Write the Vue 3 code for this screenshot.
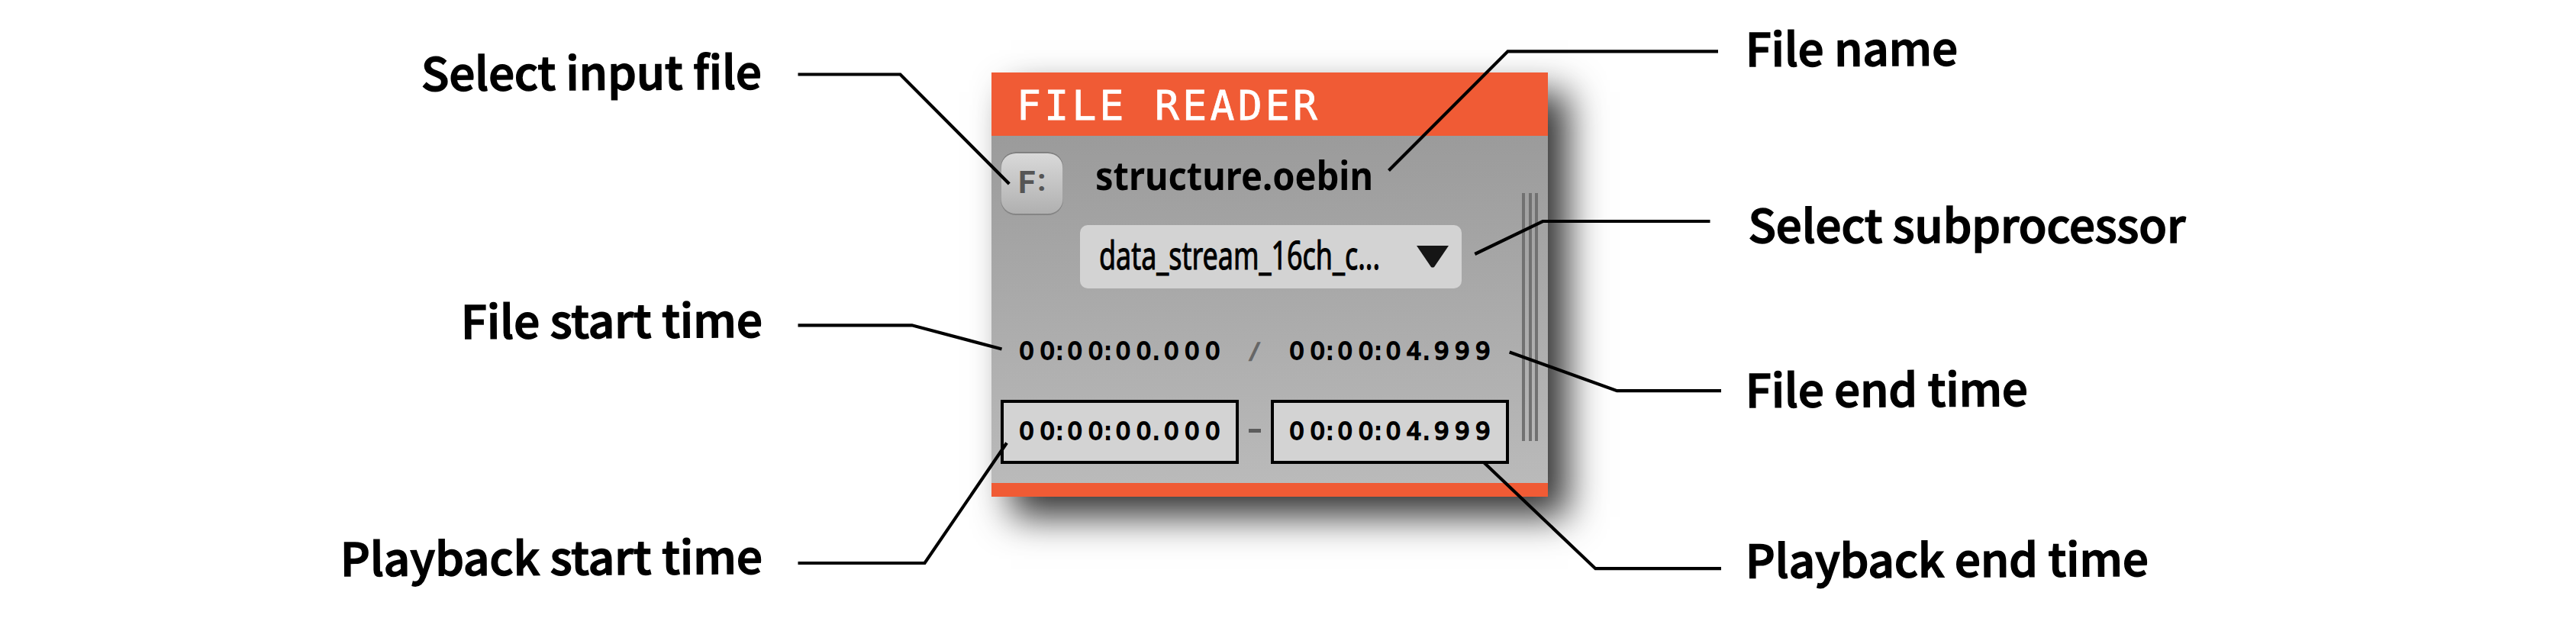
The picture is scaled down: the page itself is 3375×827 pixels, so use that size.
<script setup>
const labels = [
  { text: 'Select input file', x: 552, y: 119, length: 446, tilt: -0.33 },
  { text: 'File start time', x: 604, y: 444, length: 395, tilt: -0.33 },
  { text: 'Playback start time', x: 446, y: 755, length: 553, tilt: -0.33 },
  { text: 'File name', x: 2287, y: 87, length: 278, tilt: -0.3 },
  { text: 'Select subprocessor', x: 2290.5, y: 318, length: 573, tilt: 0 },
  { text: 'File end time', x: 2287, y: 534, length: 370, tilt: -0.33 },
  { text: 'Playback end time', x: 2287, y: 757.5, length: 528, tilt: -0.3 }
]

const leaders = [
  '1045.5,97.5 1179.5,97.5 1322.3,241',
  '1045.5,426.3 1194.8,426.3 1312.5,457.5',
  '1045.5,738 1211.5,738 1319,580.5',
  '2251,67.3 1975.5,67.3 1819.5,223.5',
  '2240.5,290 2021.3,290 1932.3,333',
  '1977.7,461.5 2118.5,512.2 2255,512.2',
  '1944,606 2090.3,745.2 2255,745.2'
]

const start = '00:00:00.000'
const end = '00:00:04.999'
const isMark = (c) => c === ':' || c === '.'
</script>

<template>
  <main class="stage">
    <section class="panel">
      <header class="title">
        <svg class="line" width="392" height="83">
          <text class="heading" x="33" y="62" textLength="394">FILE READER</text>
        </svg>
      </header>

      <div class="body">
        <div class="controls">
          <div class="file-row">
            <button class="file-button">
              <svg width="82" height="83">
                <text class="button-text" x="23" y="54">F</text>
                <text class="button-text" x="48" y="51">:</text>
              </svg>
            </button>
            <svg class="file-name" width="366" height="83">
              <text x="0" y="50" textLength="364" lengthAdjust="spacingAndGlyphs">structure.oebin</text>
            </svg>
          </div>

          <div class="select">
            <svg width="370" height="83">
              <text x="0" y="58" textLength="368" lengthAdjust="spacingAndGlyphs">data_stream_16ch_c...</text>
            </svg>
            <svg class="arrow" width="42" height="29" viewBox="0 0 42 29">
              <path d="M0 0H42L23 28Q21 29 19 28Z" />
            </svg>
          </div>

          <div class="times">
            <div class="time">
              <span v-for="(c, i) in start" :key="i" :class="isMark(c) ? 'mark' : 'digit'">{{ c }}</span>
            </div>
            <span class="between">/</span>
            <div class="time">
              <span v-for="(c, i) in end" :key="i" :class="isMark(c) ? 'mark' : 'digit'">{{ c }}</span>
            </div>
          </div>

          <div class="times playback">
            <div class="time boxed">
              <span v-for="(c, i) in start" :key="i" :class="isMark(c) ? 'mark' : 'digit'">{{ c }}</span>
            </div>
            <span class="between"><i class="dash"></i></span>
            <div class="time boxed">
              <span v-for="(c, i) in end" :key="i" :class="isMark(c) ? 'mark' : 'digit'">{{ c }}</span>
            </div>
          </div>
        </div>

        <div class="grip"><i></i><i></i><i></i></div>
      </div>

      <footer class="foot"></footer>
    </section>

    <svg class="callouts" width="3375" height="827" viewBox="0 0 3375 827">
      <polyline v-for="p in leaders" :key="p" :points="p" />
      <text
        v-for="l in labels"
        :key="l.text"
        :x="l.x"
        :y="l.y"
        :textLength="l.length"
        lengthAdjust="spacingAndGlyphs"
        :transform="`rotate(${l.tilt} ${l.x} ${l.y})`"
      >{{ l.text }}</text>
    </svg>
  </main>
</template>

<style>
body {
  margin: 0;
  background: #fff;
}
</style>

<style scoped>
.stage {
  position: relative;
  box-sizing: border-box;
  width: 3375px;
  height: 827px;
  padding: 95px 0 0 1299px;
  overflow: hidden;
  background: #fff;
}

svg {
  display: block;
  overflow: visible;
}

.panel {
  width: 729px;
  height: 556px;
  display: flex;
  flex-direction: column;
  box-shadow: 26px 26px 46px rgba(0, 0, 0, 0.8);
}

.title {
  height: 83px;
  background: #f05b35;
}

.heading {
  font: 53px "DejaVu Sans Mono", monospace;
  fill: #fff;
  stroke: #fff;
  stroke-width: 0.8px;
}

.body {
  flex: 1;
  display: flex;
  justify-content: space-between;
  background: linear-gradient(#9b9b9b, #bababa);
}

.controls {
  width: 666px;
  margin-left: 12px;
  padding-top: 21px;
}

.file-row {
  display: flex;
  gap: 42px;
}

.file-button {
  box-sizing: border-box;
  width: 82px;
  height: 83px;
  padding: 0;
  border: 0;
  border-radius: 20px;
  background: linear-gradient(#dadada, #afafaf);
  box-shadow: inset 0 2px 0 #808080, inset 0 -2px 0 #858585, inset 0 0 0 1px #a0a0a0;
}

.button-text {
  font: 700 41px Roboto, sans-serif;
  fill: #555;
}

.file-name text {
  font: 700 52px "Noto Sans", sans-serif;
  fill: #000;
}

.select {
  box-sizing: border-box;
  width: 500px;
  height: 83px;
  margin: 13px 0 0 104px;
  padding: 0 17px 0 25px;
  display: flex;
  align-items: center;
  justify-content: space-between;
  border-radius: 10px;
  background: #d3d3d3;
}

.select text {
  font: 51px "Noto Sans", sans-serif;
  fill: #000;
  stroke: #000;
  stroke-width: 1.1px;
}

.arrow {
  fill: #151515;
}

.times {
  height: 84px;
  margin-top: 40px;
  display: flex;
}

.playback {
  margin-top: 22px;
}

.time {
  box-sizing: border-box;
  width: 312px;
  display: flex;
  align-items: center;
  justify-content: center;
  font: 31.5px "DejaVu Sans", sans-serif;
  -webkit-text-stroke: 1.8px #000;
  color: #000;
}

.boxed {
  border: 4px solid #000;
  background: #d3d3d3;
}

.digit,
.mark {
  flex: none;
  display: flex;
  justify-content: center;
  width: 27.1px;
}

.mark {
  width: 9px;
  transform: translateX(-2px);
}

.boxed span {
  margin-top: -2px;
}

.between {
  width: 42px;
  display: flex;
  align-items: center;
  justify-content: center;
  font: 29px "DejaVu Sans Mono", monospace;
  -webkit-text-stroke: 1.5px #666;
  color: #666;
}

.dash {
  width: 16px;
  height: 5px;
  margin-top: -3px;
  background: #5c5c5c;
}

.grip {
  height: 325px;
  margin: 75px 13px 0 0;
  display: flex;
  gap: 4.5px;
}

.grip i {
  width: 4px;
  background: #717171;
}

.foot {
  height: 18px;
  background: #f05b35;
}

.callouts {
  position: absolute;
  inset: 0;
}

.callouts polyline {
  fill: none;
  stroke: #000;
  stroke-width: 4.2;
}

.callouts text {
  font: 500 59.5px "Noto Sans CJK SC", sans-serif;
  fill: #000;
  stroke: #000;
  stroke-width: 1.6px;
}
</style>
